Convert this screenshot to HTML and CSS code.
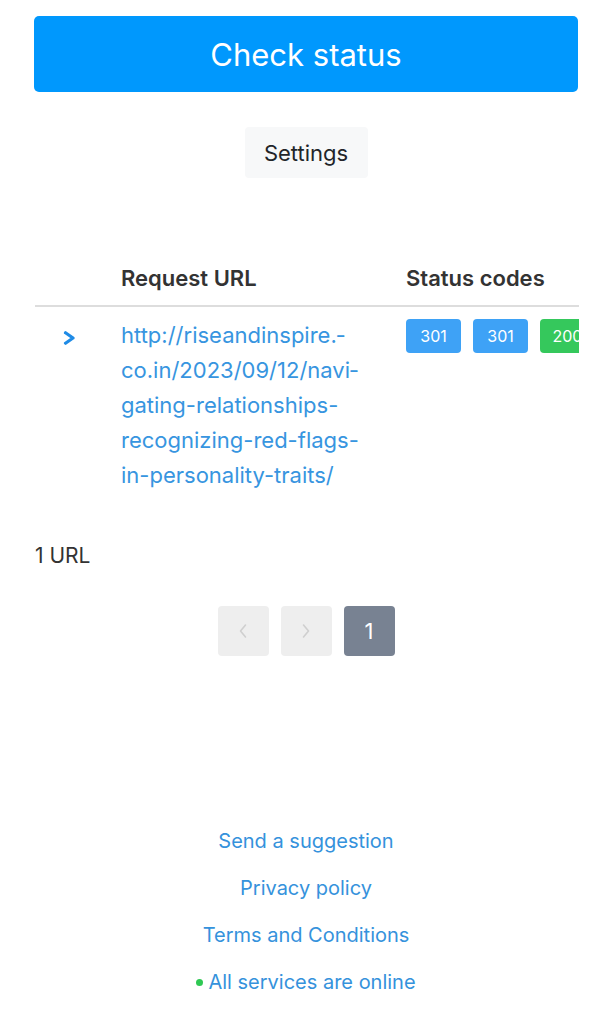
FILE: index.html
```html
<!DOCTYPE html>
<html lang="en">
<head>
<meta charset="utf-8">
<title>Check status</title>
<link rel="stylesheet" href="styles.css">
</head>
<body>
<main class="page">
  <button class="btn-check" type="button">Check status</button>
  <div class="settings-wrap">
    <button class="btn-settings" type="button">Settings</button>
  </div>

  <div class="table-wrap">
    <table class="results">
      <thead>
        <tr>
          <th class="col-toggle"></th>
          <th class="col-url">Request URL</th>
          <th class="col-codes">Status codes</th>
        </tr>
      </thead>
      <tbody>
        <tr>
          <td class="col-toggle">
            <svg class="chev" width="13" height="14" viewBox="0 0 13 14" aria-hidden="true">
              <path d="M2.5 1.8 L10 7 L2.5 12.2" fill="none" stroke="#1f8be6" stroke-width="3.2" stroke-linecap="round" stroke-linejoin="round"/>
            </svg>
          </td>
          <td class="col-url"><a class="url" href="#">http://riseandinspire.&shy;co.in/2023/09/12/navi&shy;gating-relationships-recognizing-red-flags-in-personality-traits/</a></td>
          <td class="col-codes">
            <div class="codes">
              <span class="badge badge-redirect">301</span>
              <span class="badge badge-redirect">301</span>
              <span class="badge badge-ok">200</span>
            </div>
          </td>
        </tr>
      </tbody>
    </table>
  </div>

  <p class="count">1 URL</p>

  <nav class="pager">
    <span class="page-btn disabled">
      <svg width="10" height="16" viewBox="0 0 10 16" aria-hidden="true"><path d="M7.5 2 L2.5 8 L7.5 14" fill="none" stroke="#cfcfcf" stroke-width="1.6" stroke-linecap="round" stroke-linejoin="round"/></svg>
    </span>
    <span class="page-btn disabled">
      <svg width="10" height="16" viewBox="0 0 10 16" aria-hidden="true"><path d="M2.5 2 L7.5 8 L2.5 14" fill="none" stroke="#cfcfcf" stroke-width="1.6" stroke-linecap="round" stroke-linejoin="round"/></svg>
    </span>
    <span class="page-btn active">1</span>
  </nav>

  <footer class="footer">
    <a href="#">Send a suggestion</a>
    <a href="#">Privacy policy</a>
    <a href="#">Terms and Conditions</a>
    <a href="#" class="status"><span class="dot"></span>All services are online</a>
  </footer>
</main>
</body>
</html>
```

FILE: styles.css
```css
* { box-sizing: border-box; }

html, body {
  margin: 0;
  padding: 0;
  background: #ffffff;
}

body {
  font-family: Inter, "Liberation Sans", Arial, sans-serif;
  color: #333333;
}

.page {
  padding: 16px 34px 0 34px;
  display: flex;
  flex-direction: column;
}

.btn-check {
  display: block;
  width: 100%;
  height: 76px;
  border: 0;
  border-radius: 5px;
  background: #0098fd;
  color: #ffffff;
  font-family: inherit;
  font-size: 31px;
  padding: 0;
  margin: 0;
}

.settings-wrap {
  display: flex;
  justify-content: center;
  margin-top: 35px;
}

.btn-settings {
  width: 123px;
  height: 51px;
  border: 0;
  border-radius: 4px;
  background: #f7f8f9;
  color: #222529;
  font-family: inherit;
  font-size: 22px;
  padding: 0;
}

.table-wrap {
  margin-top: 77px;
  overflow: hidden;
  width: 544px;
  margin-left: 1px;
}

.results {
  border-collapse: collapse;
  table-layout: fixed;
  width: 630px;
}

.results th {
  text-align: left;
  font-size: 22px;
  font-weight: 600;
  color: #333333;
  line-height: 24px;
  padding: 11px 0 15px 0;
  border-bottom: 2px solid #dddddd;
  white-space: nowrap;
}

.results td {
  vertical-align: top;
  padding: 11px 0 13px 0;
}

.col-toggle { width: 86px; }
.col-url { width: 285px; }
.col-codes { width: 259px; }

td.col-toggle {
  padding: 24px 0 0 28px;
}

.chev { display: block; }

.url {
  display: block;
  width: 252px;
  font-size: 22px;
  line-height: 35px;
  color: #3795e0;
  text-decoration: none;
  hyphens: manual;
  word-break: normal;
}

.codes {
  display: flex;
  gap: 12px;
  padding-top: 1px;
  white-space: nowrap;
}

.badge {
  display: inline-flex;
  align-items: center;
  justify-content: center;
  width: 55px;
  height: 34px;
  border-radius: 4px;
  color: #ffffff;
  font-size: 16px;
}

.badge-redirect { background: #3ea2f6; }
.badge-ok { background: #35c85c; }

.count {
  margin: 38px 0 0 1px;
  font-size: 21px;
  line-height: 24px;
  color: #333333;
}

.pager {
  display: flex;
  justify-content: center;
  gap: 12px;
  margin-top: 38px;
}

.page-btn {
  display: flex;
  align-items: center;
  justify-content: center;
  width: 51px;
  height: 50px;
  border-radius: 4px;
  font-size: 22px;
}

.page-btn.disabled { background: #eeeeee; }

.page-btn.active {
  background: #788292;
  color: #ffffff;
}

.footer {
  margin-top: 173px;
  display: flex;
  flex-direction: column;
  align-items: center;
  gap: 23px;
}

.footer a {
  font-size: 20px;
  line-height: 24px;
  color: #3592dc;
  text-decoration: none;
}

.footer .status {
  display: flex;
  align-items: center;
}

.dot {
  width: 7px;
  height: 7px;
  border-radius: 50%;
  background: #2fc853;
  margin-right: 5px;
}
```
